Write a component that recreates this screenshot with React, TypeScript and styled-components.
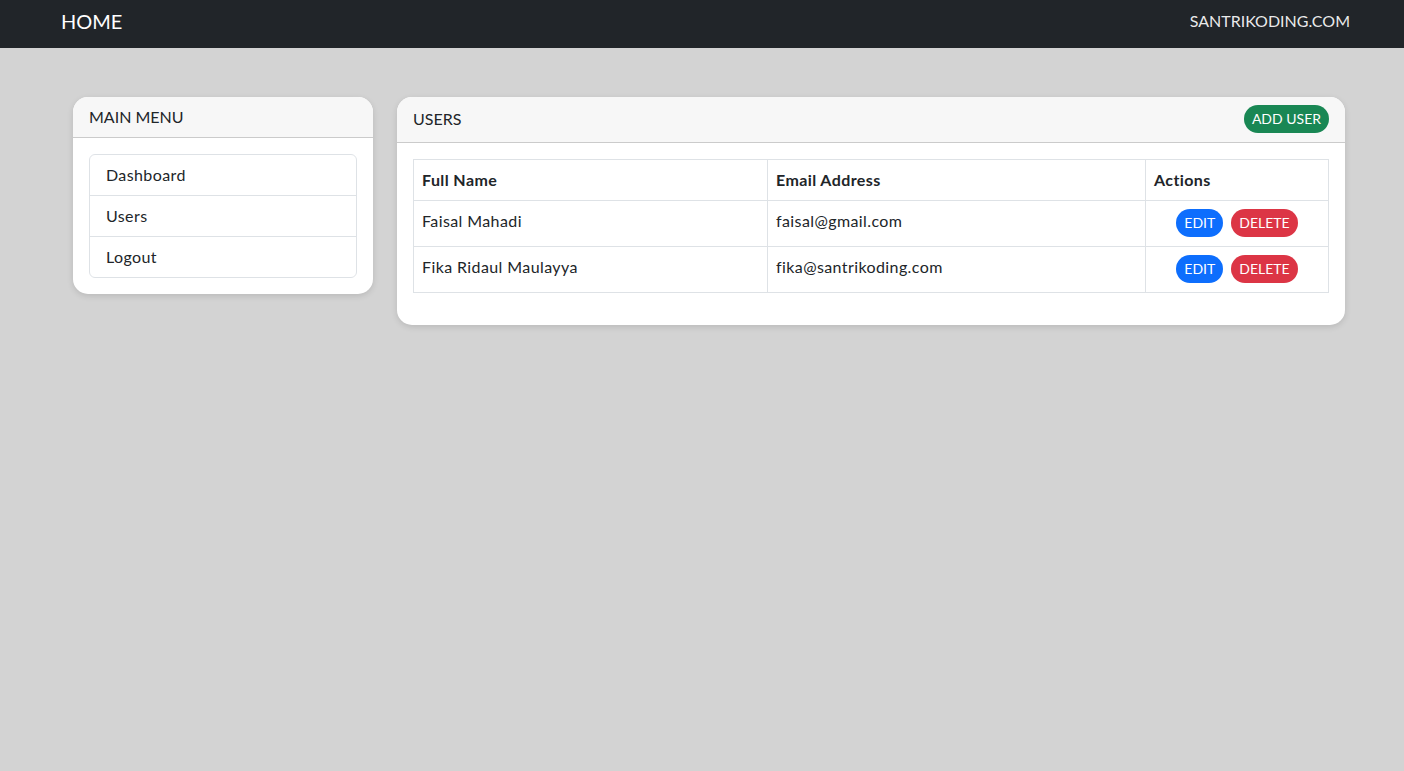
import styled, {createGlobalStyle} from "styled-components";

const GlobalStyle = createGlobalStyle`
  * {
    box-sizing: border-box;
  }

  body {
    margin: 0;
    background-color: #d3d3d3;
    font-family: Lato, "Noto Sans", sans-serif;
    font-size: 16px;
    line-height: 24px;
    color: #212529;
  }
`

const Page = styled.div`
  min-height: 100vh;
`

const Navbar = styled.nav`
  height: 48px;
  background-color: #212529;
  display: flex;
  align-items: center;
  justify-content: space-between;
  padding: 0 54px 6px 61px;

  .brand {
    color: #fff;
    font-size: 20px;
    text-decoration: none;
  }

  .site-link {
    color: rgba(255, 255, 255, 0.92);
    font-size: 16px;
    text-decoration: none;
  }
`

const Content = styled.main`
  display: flex;
  align-items: flex-start;
  gap: 24px;
  padding: 49px 59px 0 73px;
`

const Card = styled.section<{ $width?: number }>`
  background-color: #fff;
  border-radius: 15px;
  box-shadow: 0 2px 6px rgba(0, 0, 0, 0.12);
  overflow: hidden;
  ${({$width}) => $width ? `width: ${$width}px; flex: none;` : `flex: 1;`}
`

const CardHeader = styled.div<{ $tall?: boolean }>`
  display: flex;
  align-items: center;
  justify-content: space-between;
  padding: ${({$tall}) => $tall ? "8px 16px 9px" : "8px 16px"};
  background-color: #f7f7f7;
  border-bottom: 1px solid rgba(0, 0, 0, 0.175);
`

const CardBody = styled.div`
  padding: 16px;
`

const ListGroup = styled.ul`
  list-style: none;
  margin: 0;
  padding: 0;
  border: 1px solid #dee2e6;
  border-radius: 6px;

  li {
    padding: 8px 16px;
    letter-spacing: 0.4px;
  }

  li + li {
    border-top: 1px solid #dee2e6;
  }
`

const Table = styled.table`
  width: 100%;
  border-collapse: collapse;
  margin-bottom: 16px;

  th, td {
    border: 1px solid #dee2e6;
    padding: 8px;
    text-align: left;
    vertical-align: top;
    letter-spacing: 0.4px;
  }

  th {
    font-weight: 700;
  }

  td.actions {
    padding: 8px 8px 9px;
    letter-spacing: 0;
  }
`

const Actions = styled.div`
  display: flex;
  justify-content: center;
  gap: 8px;
`

const PillButton = styled.button<{ $color: string }>`
  height: 28px;
  padding: 0 8px;
  border: none;
  border-radius: 14px;
  background-color: ${({$color}) => $color};
  color: #fff;
  font-family: inherit;
  font-size: 14px;
  line-height: 28px;
  text-transform: uppercase;
  cursor: pointer;
`

const users = [
    {name: "Faisal Mahadi", email: "faisal@gmail.com"},
    {name: "Fika Ridaul Maulayya", email: "fika@santrikoding.com"},
]

export default function App() {
    return (
        <Page>
            <GlobalStyle/>
            <Navbar>
                <a className="brand" href="#">HOME</a>
                <a className="site-link" href="#">SANTRIKODING.COM</a>
            </Navbar>
            <Content>
                <Card $width={300}>
                    <CardHeader>MAIN MENU</CardHeader>
                    <CardBody>
                        <ListGroup>
                            <li>Dashboard</li>
                            <li>Users</li>
                            <li>Logout</li>
                        </ListGroup>
                    </CardBody>
                </Card>
                <Card>
                    <CardHeader $tall>
                        <span>USERS</span>
                        <PillButton $color="#198754">Add User</PillButton>
                    </CardHeader>
                    <CardBody>
                        <Table>
                            <thead>
                            <tr>
                                <th style={{width: 354}}>Full Name</th>
                                <th style={{width: 378}}>Email Address</th>
                                <th>Actions</th>
                            </tr>
                            </thead>
                            <tbody>
                            {users.map(user => (
                                <tr key={user.email}>
                                    <td>{user.name}</td>
                                    <td>{user.email}</td>
                                    <td className="actions">
                                        <Actions>
                                            <PillButton $color="#0d6efd">Edit</PillButton>
                                            <PillButton $color="#dc3545">Delete</PillButton>
                                        </Actions>
                                    </td>
                                </tr>
                            ))}
                            </tbody>
                        </Table>
                    </CardBody>
                </Card>
            </Content>
        </Page>
    )
}
